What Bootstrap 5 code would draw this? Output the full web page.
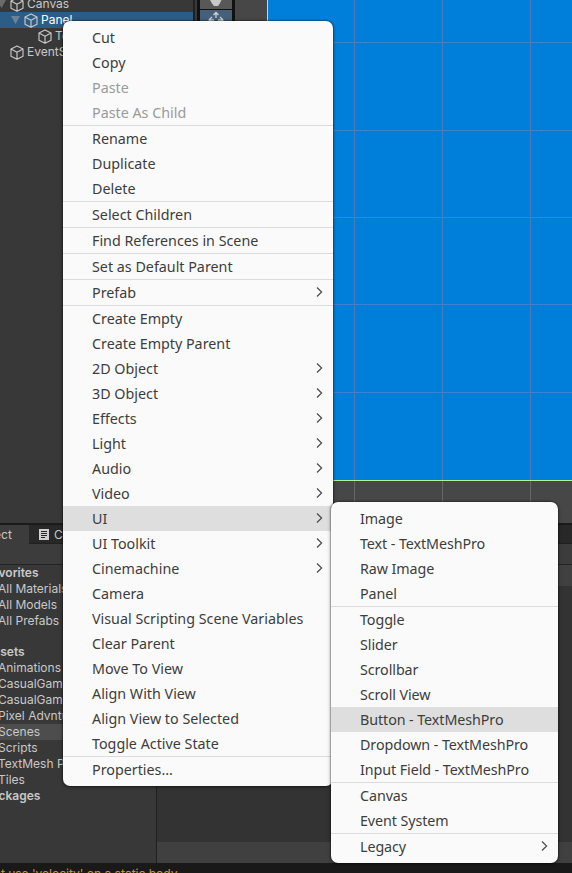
<!DOCTYPE html>
<html lang="en">
<head>
<meta charset="utf-8">
<title>Editor context menu</title>
<link rel="stylesheet" href="https://cdn.jsdelivr.net/npm/bootstrap@5.3.0/dist/css/bootstrap.min.css">
<style>
body{width:572px;height:873px;overflow:hidden;background:#191919;font-family:Inter,"Liberation Sans",sans-serif;font-size:12px;color:#c8c8c8;line-height:16px}
.upper{height:523px;overflow:hidden}
.hier{width:193px;background:#383838}
.hrow{height:16px;white-space:nowrap}
.hrow.first{margin-top:-4px}
.hrow.sel{background:#2c5d87;color:#fff}
.hrow.child{padding-left:38px}
.hrow.root{padding-left:10px}
.hrow svg{flex:none}
.tri{width:10px;height:8px;fill:#6b6b6b;margin-left:-3px;margin-right:3px}
.sel .tri{fill:#6c8296;margin-left:11px}
.cube{width:14px;height:15px;fill:none;stroke:#c8c8c8;stroke-width:1.15;stroke-linejoin:round;margin-right:3px}
.gutter{width:7px;background:linear-gradient(90deg,#202020 2px,#3a3a3a 2px 4px,#111 4px)}
.tools{width:35px;background:#111;height:523px}
.tools svg{display:block}
.scene{background:#474747;position:relative}
.stagebox{margin-left:32px;height:481px;border-left:1px solid #b4e6a8;border-bottom:1px solid #b4f09a;background:#007fda}
.gridlines{position:absolute;inset:0}
.lower{height:340px;border-top:2px solid #1a1a1a}
.tabs{height:19px;background:#282828;border-bottom:1px solid #202020}
.tab-on{width:29px;background:#3c3c3c;height:19px;white-space:nowrap;padding-top:2px}
.tab-on span{margin-left:-28px}
.tab-off{padding:2px 0 0 10px;white-space:nowrap}
.tab-off svg{margin-top:2px}
.toolstrip{height:21px;background:#3c3c3c;border-bottom:1px solid #232323}
.tree{width:157px;background:#383838;border-right:1px solid #202020;white-space:nowrap;overflow:hidden}
.tree div{height:16px;text-indent:-2px}
.tree b{font-weight:600}
.tree .group-fav{text-indent:-15px}
.tree .group-assets{margin-top:15px;text-indent:-15px}
.tree .group-pack{text-indent:-16px}
.tree .on{background:#4d4d4d}
.assets{background:#333}
.bar21{height:21px;background:#404040}
.status{height:10px;overflow:hidden;background:#191919;color:#c89b10;white-space:nowrap}
.status div{margin:3px 0 0 -36px}
.ctx{position:absolute;background:#fafafa;border-radius:7px;padding:4px 0;box-shadow:0 0 2px rgba(0,0,0,.9),0 1px 4px rgba(0,0,0,.35);color:#3d3d3d;font-family:"Noto Sans",sans-serif;font-size:14.3px;line-height:25px;white-space:nowrap}
.ctx-main{left:63px;top:21px;width:270px}
.ctx-sub{left:331px;top:502px;width:227px;letter-spacing:-.08px}
.mi{height:25px;padding-left:29px;padding-right:10px}
.mi.off{color:#9b9b9b}
.mi.hot{background:#dedede}
.sepline{height:1px;background:#dcdcdc}
.mi svg{width:7px;height:12px;fill:none;stroke:#4a4a4a;stroke-width:1.2;margin-top:-1px}
</style>
<script src="https://cdn.jsdelivr.net/npm/bootstrap@5.3.0/dist/js/bootstrap.bundle.min.js"></script>
</head>
<body class="position-relative">
<svg class="d-none">
<symbol id="cube" viewBox="0 0 14 15"><path d="M7 1l6 3v7.2l-6 3-6-3V4zM1 4l6 3.2L13 4M7 7.2v7"/></symbol>
<symbol id="chev" viewBox="0 0 7 12"><path d="M1 1.500l4.600 4.500L1 10.500"/></symbol>
</svg>
<div class="upper d-flex">
  <div class="hier flex-shrink-0">
    <div class="hrow first d-flex align-items-center"><svg class="tri" viewBox="0 0 10 8"><path d="M0 0h9L4.500 8z"/></svg><svg class="cube"><use href="#cube"/></svg><span>Canvas</span></div>
    <div class="hrow sel d-flex align-items-center"><svg class="tri" viewBox="0 0 10 8"><path d="M0 0h9L4.500 8z"/></svg><svg class="cube"><use href="#cube"/></svg><span>Panel</span></div>
    <div class="hrow child d-flex align-items-center"><svg class="cube"><use href="#cube"/></svg><span>Text</span></div>
    <div class="hrow root d-flex align-items-center"><svg class="cube"><use href="#cube"/></svg><span>EventSystem</span></div>
  </div>
  <div class="gutter flex-shrink-0"></div>
  <div class="tools flex-shrink-0">
    <svg width="35" height="28" viewBox="0 0 35 28"><path fill="#585858" d="M0 0h32v9H0z"/><path fill="#46607c" d="M0 10h32v18H0z"/><path fill="#c8c8c8" d="M10 0h11.500l-2 4-1.500 2h-4l-2-2.500z"/><path d="M16 13V18M13.500 15L16 12.500l2.500 2.500M12 17l-3 3 2.500 3M20 17l3 3-2.500 3M9 20h5M18 20h5" fill="none" stroke="#d0d0d0" stroke-width="1.300"/></svg>
  </div>
  <div class="scene flex-grow-1">
    <div class="stagebox"></div>
    <svg class="gridlines" width="337" height="523"><path stroke="#3c82cf" d="M33 42.500H337M33 130.500H337M33 217.500H337M33 304.500H337M33 392.500H337"/><path stroke="#4a7cc0" d="M119.500 0V480M207.500 0V480M295.500 0V480"/><path stroke="#666" d="M119.500 481V523M207.500 481V523M295.500 481V523"/></svg>
  </div>
</div>
<div class="lower d-flex flex-column">
  <div class="tabs d-flex flex-shrink-0"><div class="tab-on"><span>Project</span></div><div class="tab-off d-flex"><svg width="11" height="12" class="me-1"><path fill="#d0d0d0" d="M0 0h10v11H0z"/><path stroke="#282828" d="M2 2.500h6M2 4.500h6M2 6.500h6M2 8.500h4"/></svg>Console</div></div>
  <div class="toolstrip flex-shrink-0"></div>
  <div class="d-flex flex-grow-1">
    <div class="tree flex-shrink-0">
      <div class="group-fav"><b>Favorites</b></div><div>All Materials</div><div>All Models</div><div>All Prefabs</div>
      <div class="group-assets"><b>Assets</b></div><div>Animations</div><div>CasualGame</div><div>CasualGame</div><div>Pixel Advnture</div><div class="on">Scenes</div><div>Scripts</div><div>TextMesh Pro</div><div>Tiles</div>
      <div class="group-pack"><b>Packages</b></div>
    </div>
    <div class="assets flex-grow-1 d-flex flex-column justify-content-between"><div class="bar21"></div><div class="bar21"></div></div>
  </div>
</div>
<div class="status"><div>Cannot use 'velocity' on a static body.</div></div>

<div class="ctx ctx-main">
<div class="mi">Cut</div><div class="mi">Copy</div><div class="mi off">Paste</div><div class="mi off">Paste As Child</div><div class="sepline"></div>
<div class="mi">Rename</div><div class="mi">Duplicate</div><div class="mi">Delete</div><div class="sepline"></div>
<div class="mi">Select Children</div><div class="sepline"></div>
<div class="mi">Find References in Scene</div><div class="sepline"></div>
<div class="mi">Set as Default Parent</div><div class="sepline"></div>
<div class="mi d-flex align-items-center justify-content-between">Prefab<svg><use href="#chev"/></svg></div><div class="sepline"></div>
<div class="mi">Create Empty</div><div class="mi">Create Empty Parent</div>
<div class="mi d-flex align-items-center justify-content-between">2D Object<svg><use href="#chev"/></svg></div>
<div class="mi d-flex align-items-center justify-content-between">3D Object<svg><use href="#chev"/></svg></div>
<div class="mi d-flex align-items-center justify-content-between">Effects<svg><use href="#chev"/></svg></div>
<div class="mi d-flex align-items-center justify-content-between">Light<svg><use href="#chev"/></svg></div>
<div class="mi d-flex align-items-center justify-content-between">Audio<svg><use href="#chev"/></svg></div>
<div class="mi d-flex align-items-center justify-content-between">Video<svg><use href="#chev"/></svg></div>
<div class="mi hot d-flex align-items-center justify-content-between">UI<svg><use href="#chev"/></svg></div>
<div class="mi d-flex align-items-center justify-content-between">UI Toolkit<svg><use href="#chev"/></svg></div>
<div class="mi d-flex align-items-center justify-content-between">Cinemachine<svg><use href="#chev"/></svg></div>
<div class="mi">Camera</div><div class="mi">Visual Scripting Scene Variables</div><div class="mi">Clear Parent</div><div class="mi">Move To View</div><div class="mi">Align With View</div><div class="mi">Align View to Selected</div><div class="mi">Toggle Active State</div><div class="sepline"></div>
<div class="mi">Properties...</div>
</div>

<div class="ctx ctx-sub">
<div class="mi">Image</div><div class="mi">Text - TextMeshPro</div><div class="mi">Raw Image</div><div class="mi">Panel</div><div class="sepline"></div>
<div class="mi">Toggle</div><div class="mi">Slider</div><div class="mi">Scrollbar</div><div class="mi">Scroll View</div><div class="mi hot">Button - TextMeshPro</div><div class="mi">Dropdown - TextMeshPro</div><div class="mi">Input Field - TextMeshPro</div><div class="sepline"></div>
<div class="mi">Canvas</div><div class="mi">Event System</div><div class="sepline"></div>
<div class="mi d-flex align-items-center justify-content-between">Legacy<svg><use href="#chev"/></svg></div>
</div>
</body>
</html>
